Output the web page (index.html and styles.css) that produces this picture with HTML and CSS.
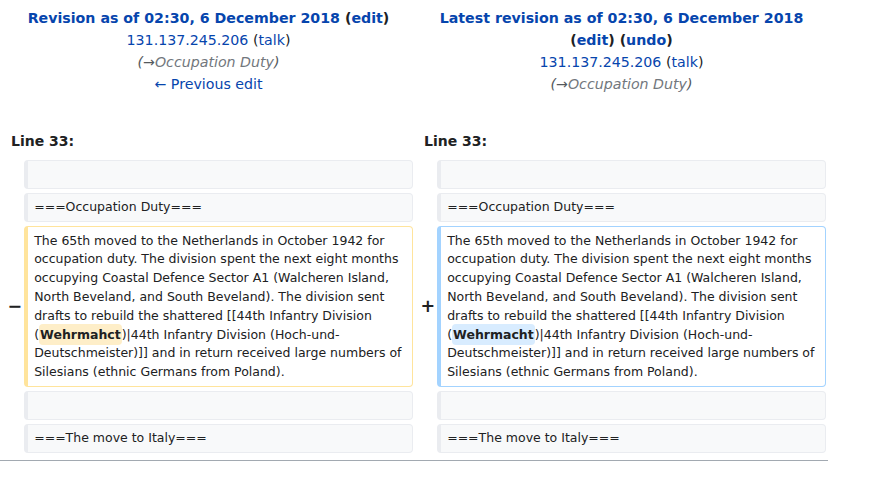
FILE: index.html
```html
<!DOCTYPE html>
<html lang="en">
<head>
<meta charset="utf-8">
<title>Diff</title>
<link rel="stylesheet" href="styles.css">
</head>
<body>
<table class="diff">
  <colgroup>
    <col class="col-marker"><col class="col-content"><col class="col-marker"><col class="col-content">
  </colgroup>
  <tr>
    <td colspan="2" class="title-cell">
      <div class="title"><a href="#" class="link">Revision as of 02:30, 6 December 2018</a> <span class="paren">(<a href="#" class="link">edit</a>)</span></div>
      <div><a href="#" class="link">131.137.245.206</a> <span class="paren">(<a href="#" class="link">talk</a>)</span></div>
      <div class="comment">(→<span class="auto">Occupation Duty</span>)</div>
      <div><a href="#" class="link">← Previous edit</a></div>
    </td>
    <td colspan="2" class="title-cell">
      <div class="title"><a href="#" class="link">Latest revision as of 02:30, 6 December 2018</a> <span class="paren">(<a href="#" class="link">edit</a>)</span> <span class="paren">(<a href="#" class="link">undo</a>)</span></div>
      <div><a href="#" class="link">131.137.245.206</a> <span class="paren">(<a href="#" class="link">talk</a>)</span></div>
      <div class="comment">(→<span class="auto">Occupation Duty</span>)</div>
    </td>
  </tr>
  <tr>
    <td colspan="2" class="lineno">Line 33:</td>
    <td colspan="2" class="lineno">Line 33:</td>
  </tr>
  <tr>
    <td class="marker"></td>
    <td class="line context"><div>&nbsp;</div></td>
    <td class="marker"></td>
    <td class="line context"><div>&nbsp;</div></td>
  </tr>
  <tr>
    <td class="marker"></td>
    <td class="line context"><div>===Occupation Duty===</div></td>
    <td class="marker"></td>
    <td class="line context"><div>===Occupation Duty===</div></td>
  </tr>
  <tr>
    <td class="marker"><span class="sign">−</span></td>
    <td class="line deleted"><div>The 65th moved to the Netherlands in October 1942 for occupation duty. The division spent the next eight months occupying Coastal Defence Sector A1 (Walcheren Island, North Beveland, and South Beveland). The division sent drafts to rebuild the shattered [[44th Infantry Division (<del class="change">Wehrmahct</del>)|44th Infantry Division (Hoch-und-Deutschmeister)]] and in return received large numbers of Silesians (ethnic Germans from Poland).</div></td>
    <td class="marker"><span class="sign">+</span></td>
    <td class="line added"><div>The 65th moved to the Netherlands in October 1942 for occupation duty. The division spent the next eight months occupying Coastal Defence Sector A1 (Walcheren Island, North Beveland, and South Beveland). The division sent drafts to rebuild the shattered [[44th Infantry Division (<ins class="change">Wehrmacht</ins>)|44th Infantry Division (Hoch-und-Deutschmeister)]] and in return received large numbers of Silesians (ethnic Germans from Poland).</div></td>
  </tr>
  <tr>
    <td class="marker"></td>
    <td class="line context"><div>&nbsp;</div></td>
    <td class="marker"></td>
    <td class="line context"><div>&nbsp;</div></td>
  </tr>
  <tr>
    <td class="marker"></td>
    <td class="line context"><div>===The move to Italy===</div></td>
    <td class="marker"></td>
    <td class="line context"><div>===The move to Italy===</div></td>
  </tr>
</table>
<div class="rule"></div>
</body>
</html>
```

FILE: styles.css
```css
html, body {
  margin: 0;
  padding: 0;
  background: #ffffff;
}
body {
  font-family: "DejaVu Sans", sans-serif;
  font-size: 14.2px;
  color: #202122;
}
.diff {
  width: 830px;
  table-layout: fixed;
  border-collapse: separate;
  border-spacing: 4px;
  margin: 0;
}
.col-marker { width: 2%; }
.col-content { width: 48%; }
.diff td {
  padding: 0;
}
.title-cell {
  text-align: center;
  vertical-align: top;
  line-height: 22px;
  padding-top: 3px !important;
  padding-bottom: 1px !important;
}
.title {
  font-weight: bold;
}
.link {
  color: #0645ad;
  text-decoration: none;
}
.paren {
  color: #202122;
}
.comment {
  font-style: italic;
  color: #54595d;
}
.comment .auto {
  color: #72777d;
}
.diff td.lineno {
  font-weight: bold;
  font-size: 14px;
  line-height: 22px;
  padding: 30px 7px 4px 7px;
  text-align: left;
}
.diff td.marker {
  text-align: right;
  vertical-align: middle;
  font-weight: bold;
  font-size: 17.5px;
  line-height: 1.2;
  color: #202122;
}
.sign {
  margin-right: -2px;
}
.diff td.line {
  font-size: 12.5px;
  line-height: 18.8px;
  vertical-align: top;
  white-space: pre-wrap;
  word-wrap: break-word;
  border-style: solid;
  border-width: 1px 1px 1px 4px;
  border-radius: 4px;
}
.diff td.line div {
  padding: 4.2px 6px;
}
.diff td.context {
  background: #f8f9fa;
  border-color: #eaecf0;
  color: #202122;
}
.diff td.deleted {
  background: #ffffff;
  border-color: #ffe49c;
}
.diff td.added {
  background: #ffffff;
  border-color: #a3d3ff;
}
.change {
  font-weight: bold;
  text-decoration: none;
  border-radius: 4px;
  padding: 3px 1px;
}
del.change {
  background: #feeec8;
}
ins.change {
  background: #d8ecff;
}
.rule {
  width: 828px;
  margin-top: 3px;
  border-top: 1px solid #a2a9b1;
}
```
